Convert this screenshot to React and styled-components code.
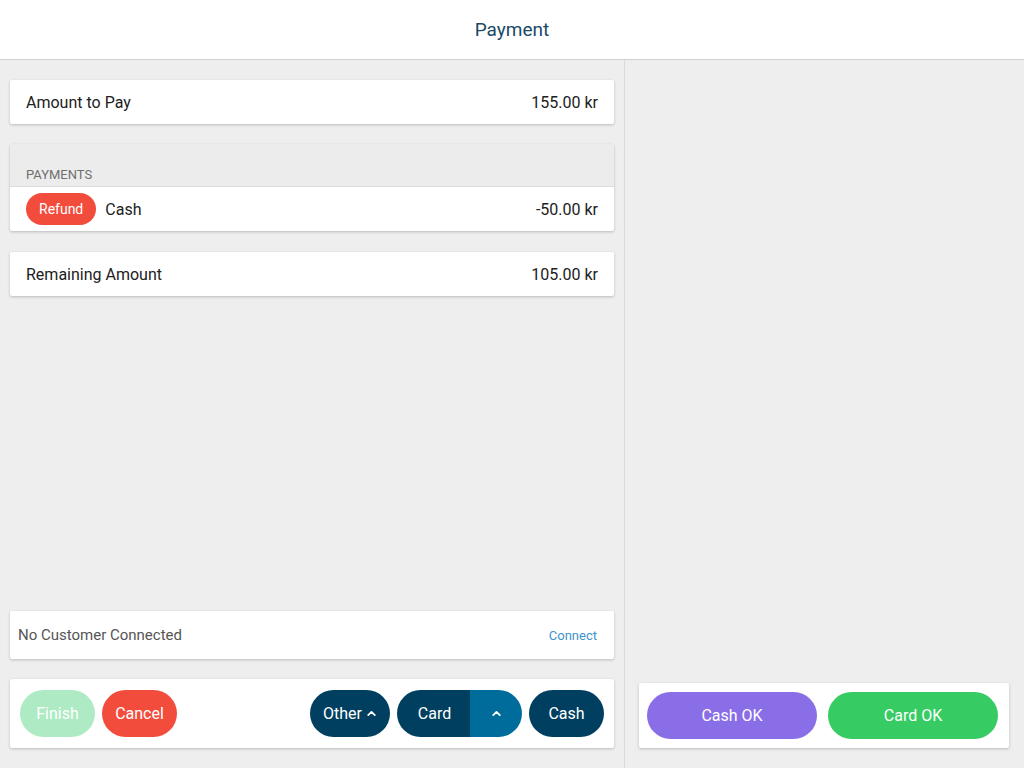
import React from "react";
import styled, { createGlobalStyle } from "styled-components";

const Global = createGlobalStyle`
  html, body { margin: 0; padding: 0; }
  body { font-family: Roboto, "Noto Sans", Arial, sans-serif; background: #eeeeee; color: #212121; }
  * { box-sizing: border-box; }
`;

const Page = styled.div`
  height: 768px;
  display: flex;
  flex-direction: column;
  background: #eeeeee;
`;

const Header = styled.header`
  height: 60px;
  flex: none;
  background: #fff;
  border-bottom: 1px solid #d0d0d0;
  display: flex;
  align-items: center;
  justify-content: center;
  font-size: 19px;
  color: #1b4a68;
`;

const Main = styled.div`
  flex: 1;
  display: flex;
  min-height: 0;
`;

const LeftCol = styled.section`
  width: 625px;
  border-right: 1px solid #dadada;
  padding: 20px 10px 20px 10px;
  display: flex;
  flex-direction: column;
  gap: 20px;
`;

const RightCol = styled.section`
  flex: 1;
  display: flex;
  flex-direction: column;
  justify-content: flex-end;
  padding: 0 15px 20px 14px;
`;

const Card = styled.div`
  background: #fff;
  box-shadow: 0 1px 3px rgba(0, 0, 0, 0.22);
  border-radius: 2px;
  ${(p) => p.$mt && `margin-top: ${p.$mt}px;`}
`;

const Row = styled.div`
  height: 44px;
  display: flex;
  align-items: center;
  justify-content: space-between;
  padding: 0 16px;
  font-size: 16px;
  color: #212121;
`;

const Left = styled.div`
  display: flex;
  align-items: center;
  gap: 9px;
`;

const SectionHead = styled.div`
  height: 43px;
  background: #ececec;
  border-bottom: 1px solid #dcdcdc;
  display: flex;
  align-items: flex-end;
  padding: 0 16px 4px;
  font-size: 13px;
  color: #6f6f6f;
  text-transform: uppercase;
`;

const Pill = styled.span`
  height: 32px;
  padding: 0 13px;
  border-radius: 16px;
  background: #f24c3d;
  color: #fff;
  font-size: 14px;
  display: inline-flex;
  align-items: center;
`;

const Spacer = styled.div`
  flex: 1;
`;

const CustomerRow = styled.div`
  height: 48px;
  display: flex;
  align-items: center;
  justify-content: space-between;
  padding: 0 17px 0 8px;
  font-size: 15px;
  color: #555;
`;

const LinkText = styled.span`
  font-size: 13px;
  color: #3d93cc;
`;

const ActionBar = styled.div`
  height: 69px;
  display: flex;
  align-items: center;
  gap: 7px;
  padding: 0 10px;
`;

const Btn = styled.button`
  height: 47px;
  width: ${(p) => p.$w}px;
  border: none;
  border-radius: 24px;
  background: ${(p) => p.$bg};
  color: #fff;
  font-family: inherit;
  font-size: 16px;
  display: inline-flex;
  align-items: center;
  justify-content: center;
  gap: 4px;
  padding: 0;
  ${(p) => p.$push && "margin-left: auto;"}
`;

const Split = styled.div`
  height: 47px;
  display: flex;
  border-radius: 24px;
  overflow: hidden;
`;

const SplitPart = styled.button`
  height: 47px;
  width: ${(p) => p.$w}px;
  border: none;
  background: ${(p) => p.$bg};
  color: #fff;
  font-family: inherit;
  font-size: 16px;
  display: flex;
  align-items: center;
  justify-content: center;
  padding: ${(p) => (p.$pl ? `0 0 0 ${p.$pl}px` : "0")};
`;

const OkBar = styled.div`
  height: 65px;
  display: flex;
  align-items: center;
  gap: 11px;
  padding: 0 11px 0 8px;
`;

const Chevron = ({ size = 11 }) => (
  <svg width={size} height={size} viewBox="0 0 10 10" fill="none">
    <path d="M2 6.5 L5 3.5 L8 6.5" stroke="#fff" strokeWidth="1.6" strokeLinecap="round" strokeLinejoin="round" />
  </svg>
);

export default function App() {
  return (
    <Page>
      <Global />
      <Header>Payment</Header>
      <Main>
        <LeftCol>
          <Card>
            <Row>
              <span>Amount to Pay</span>
              <span>155.00 kr</span>
            </Row>
          </Card>
          <Card>
            <SectionHead>Payments</SectionHead>
            <Row>
              <Left>
                <Pill>Refund</Pill>
                <span>Cash</span>
              </Left>
              <span>-50.00 kr</span>
            </Row>
          </Card>
          <Card $mt={1}>
            <Row>
              <span>Remaining Amount</span>
              <span>105.00 kr</span>
            </Row>
          </Card>
          <Spacer />
          <Card>
            <CustomerRow>
              <span>No Customer Connected</span>
              <LinkText>Connect</LinkText>
            </CustomerRow>
          </Card>
          <Card>
            <ActionBar>
              <Btn $w={75} $bg="#aeeac4">Finish</Btn>
              <Btn $w={75} $bg="#f24c3d">Cancel</Btn>
              <Btn $w={80} $bg="#003f5f" $push>
                Other <Chevron />
              </Btn>
              <Split>
                <SplitPart $w={73} $bg="#003f5f" $pl={2}>Card</SplitPart>
                <SplitPart $w={52} $bg="#006c9b">
                  <Chevron />
                </SplitPart>
              </Split>
              <Btn $w={75} $bg="#003f5f">Cash</Btn>
            </ActionBar>
          </Card>
        </LeftCol>
        <RightCol>
          <Card>
            <OkBar>
              <Btn $w={170} $bg="#8a6ee8">Cash OK</Btn>
              <Btn $w={170} $bg="#36cc63">Card OK</Btn>
            </OkBar>
          </Card>
        </RightCol>
      </Main>
    </Page>
  );
}
